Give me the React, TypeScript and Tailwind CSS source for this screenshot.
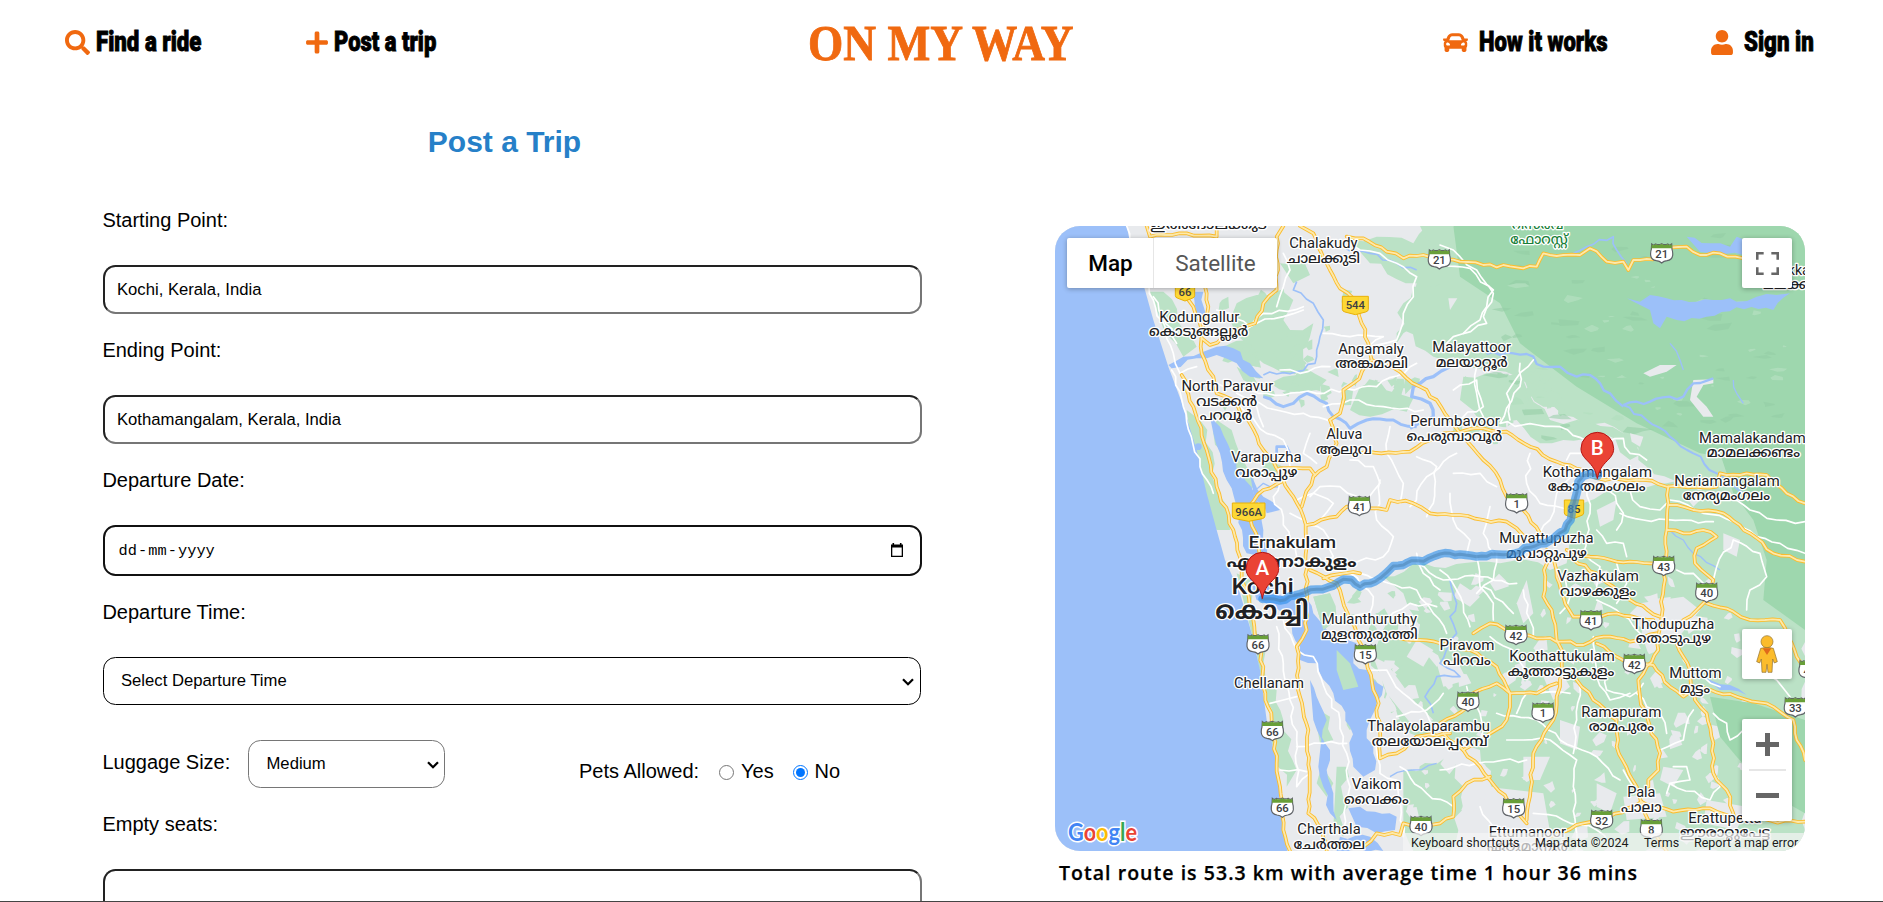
import type { ReactNode } from "react";
import { FaSearch, FaPlus, FaCar, FaUser } from "react-icons/fa";

const LAND = "#e8eaed";
const SEA = "#9cc0f9";
const GREEN = "#bbe2c6";
const FOREST = "#9ed7ae";

/* Map artwork is plotted on a 2250 x 1875 grid, three units per pixel. */

const greens = [
  // northern and central patches
  "560,250 620,225 700,215 730,240 700,300 720,330 790,310 780,350 740,400 770,430 700,460 640,430 600,380 560,345 540,300",
  "700,350 780,345 760,420 700,440 670,400",
  "700,470 760,440 830,480 800,510 720,515 660,490",
  "930,500 990,485 1040,520 1090,535 1070,575 960,590 900,570",
  "900,60 980,50 1090,70 1130,18 1210,18 1240,180 1350,250 1390,350 1300,390 1180,330 1090,320 1040,370 1060,250 1100,190 960,130",
  "1090,200 1250,170 1350,250 1400,380 1300,400 1150,410 1060,330",
  "300,215 340,215 400,330 440,380 400,410 345,340",
  "410,570 450,600 500,800 540,930 500,930 455,790 425,680",
  "500,600 545,630 590,740 610,800 590,820 540,720 490,640",
  "640,690 700,740 690,790 640,760",
  "520,380 600,360 640,400 620,440 570,430",
  "560,440 610,470 640,520 580,480",
  "690,130 760,120 780,165 730,190",
  "1110,18 1210,18 1200,90 1130,60",
  "1240,470 1310,460 1420,480 1500,600 1580,600 1720,640 1800,700 1740,720 1660,640 1540,660 1470,670 1400,600 1300,590 1230,540",
  // coast strips
  "560,1060 600,1080 640,1330 700,1500 740,1650 710,1700 660,1500 620,1300",
  "790,1130 840,1120 860,1200 820,1230",
  "860,1290 900,1330 920,1400 880,1410 860,1350",
  "790,1460 840,1490 850,1560 810,1570",
  "820,1620 850,1690 830,1730 800,1690",
  "860,1640 890,1640 880,1850 850,1820",
  // eastern midlands
  "1000,1070 1120,1030 1350,1030 1480,1030 1560,900 1660,820 1700,800 1850,790 2265,830 2265,1893 1460,1893 1400,1840 1320,1690 1290,1590 1200,1560 1080,1540 1000,1400 960,1300 1010,1210 1100,1200 1060,1120",
  "1060,1650 1190,1610 1240,1700 1200,1893 1090,1893 1060,1800",
  "1170,18 2265,18 2265,840 1900,790 1790,740 1720,640 1480,560 1400,470 1230,430 1170,330",
];

const forests = [
  "1210,18 2265,18 2265,780 2080,720 1950,700 1760,610 1580,500 1410,370 1350,250 1230,170",
  "2010,700 2265,640 2265,1230 2140,1140 2150,1020 2110,900 2050,820",
  "1980,1430 2110,1450 2265,1500 2265,1780 2160,1720 2060,1610 2010,1550",
];

const builtUp = [
  "1460,960 1560,960 1550,1030 1500,1050 1455,1020",
  "1770,1150 1900,1130 1950,1170 1880,1260 1790,1240 1740,1180",
  "1400,1150 1430,1080 1450,1180 1420,1210",
  "1230,1090 1290,1130 1260,1160 1210,1130",
  "1160,1330 1220,1320 1250,1380 1180,1400",
  "1530,1500 1590,1520 1580,1590 1530,1570",
  "1420,1610 1500,1610 1470,1680 1420,1680",
  "1640,1690 1700,1720 1680,1780 1640,1760",
  "1840,1640 1900,1650 1870,1700 1830,1680",
  "1310,1700 1480,1720 1510,1893 1330,1893 1290,1800",
  "1720,1730 1830,1720 1850,1790 1730,1800",
  "1970,1740 2090,1760 2060,1830 1960,1810",
  "1100,1260 1150,1290 1120,1340 1070,1310",
  "970,1310 1010,1330 1090,1440 1150,1500 1090,1520 1010,1420",
  "2020,940 2070,960 2060,1010 2020,990",
  "1640,870 1700,840 1690,900 1650,920",
  "1900,820 1960,830 1930,860",
  "1480,1370 1530,1350 1560,1400 1510,1440",
  "1930,480 1990,478 1990,490 1960,495 1940,530 1970,560 1990,590 1960,590 1920,540",
  "1780,460 1830,435 1880,435 1850,455 1800,470",
  "1195,235 1222,235 1200,270",
  "1740,640 1780,650 1770,680 1745,665",
];

const waters = [
  // open sea
  "15,18 230,18 243,80 285,210 310,300 355,440 400,560 440,690 470,820 500,930 525,1020 570,1120 605,1240 630,1350 650,1500 680,1630 693,1780 712,1893 15,1893",
  "355,435 400,410 460,395 500,380 550,385 600,430 640,475 600,470 560,430 500,405 440,415 365,445",
  "480,590 510,620 545,700 585,780 625,850 640,930 650,1010 590,1000 560,860 530,780 510,700 490,640",
  "600,760 640,830 690,870 650,880 610,820",
  "430,215 460,215 465,310 440,300",
  "580,1020 630,1060 700,1130 760,1120 790,1180 840,1240 920,1270 910,1330 950,1350 1000,1400 975,1470 950,1530 970,1600 975,1650 940,1670 910,1640 900,1520 850,1420 800,1330 750,1320 750,1280 700,1180 620,1140",
  "895,1765 930,1760 975,1775 1040,1790 1035,1830 980,1840 920,1820",
  "815,1550 840,1590 830,1650 850,1720 860,1800 840,1780 820,1700 805,1640",
  "780,1380 800,1430 830,1500 815,1560 790,1500",
  "870,1850 960,1850 1000,1893 860,1893",
  "1730,235 1770,245 1800,225 1850,235 1940,245 2040,235 2060,245 2120,230 2180,225 2220,220 2170,270 2060,262 1970,290 1880,300 1850,290 1830,325 1810,310 1800,270",
  "1910,50 1980,70 2040,80 2060,50 2100,65 2080,105 1950,95",
  "1960,1370 2040,1395 2090,1425 2010,1410",
];

const rivers = [
  { w: 9, d: "640,530 700,560 730,550 770,520 830,550 850,590 900,625 950,600 1030,600 1100,620" },
  { w: 10, d: "1200,440 1150,470 1090,500 1085,530 1140,550 1150,590 1080,625" },
  { w: 5, d: "740,185 730,210 790,250 820,300 810,350 800,390 795,430 740,455 640,465" },
  { w: 7, d: "1310,402 1430,402 1480,440 1530,440 1580,470 1620,465 1680,520 1720,560" },
  { w: 7, d: "1720,555 1800,545 1900,530 1930,490 1990,475" },
  { w: 6, d: "1720,555 1790,600 1860,650 1930,700 2000,760 2080,820" },
  { w: 5, d: "1570,100 1610,80 1690,50 1700,90 1730,130" },
  { w: 4, d: "1860,370 1890,420 1900,450" },
  { w: 4, d: "2050,480 2060,520 2080,550" },
  { w: 5, d: "1200,1080 1220,1150 1200,1190 1220,1240 1170,1330 1230,1370 1160,1370 1125,1430 1150,1480" },
  { w: 4, d: "1860,930 1900,960 1930,1000 2010,1050" },
  { w: 4, d: "1020,1670 1090,1650 1160,1630" },
  { w: 4, d: "590,830 640,790 690,800" },
  { w: 8, d: "680,700 680,680 710,680 720,700" },
  { w: 5, d: "880,80 960,100 1040,130 1100,150" },
];

const minor = [
  "230,18 260,110 310,240 370,400 390,460 440,440",
  "365,450 400,560 450,740 490,820",
  "310,230 380,370",
  "500,270 540,280 600,320 640,280 760,260",
  "560,340 620,310 700,290 760,270",
  "500,490 600,510 650,520 800,520 980,500 1100,430",
  "600,540 680,570 760,580 850,610",
  "570,560 650,640 700,660 720,740",
  "680,260 700,200 720,150 700,100",
  "890,60 930,90 990,100 1040,130 1100,170 1090,230 1060,280 1040,360 960,380",
  "1170,75 1210,90 1230,110 1280,150 1330,210 1310,260 1290,300 1240,340",
  "1170,135 1260,145 1330,220 1300,290 1310,310 1210,350 1180,380",
  "820,340 900,350 1000,350 960,375",
  "840,440 750,460 690,450",
  "900,720 970,740 990,790 940,850 870,800 810,800 780,830",
  "990,780 980,900 1030,950 1000,1010 900,1030",
  "690,790 670,830 700,890 720,960 740,1010",
  "740,840 790,820 850,850 810,900",
  "720,880 820,930 850,1010 760,1030",
  "1100,710 1160,740 1150,850 1130,890",
  "1080,860 1130,770 1220,700",
  "1210,510 1280,480 1300,560 1210,600",
  "1410,430 1410,500 1350,610 1530,620 1630,680",
  "1280,440 1280,520 1300,590",
  "1550,720 1560,700 1600,700 1640,670 1720,655 1740,700 1790,720",
  "1580,750 1520,820 1500,900 1460,960",
  "1670,790 1700,850 1720,880 1700,930",
  "1610,800 1620,880 1600,1000",
  "1720,790 1770,860 1830,870 1850,850",
  "1710,880 1780,900 1900,900 1990,905",
  "1860,840 1960,880 2050,905 2120,950 2190,970 2265,1000",
  "2020,820 2100,870 2180,900 2265,905",
  "1640,930 1670,970 1720,970 1730,1010",
  "2050,960 2000,1040 1990,1080",
  "2050,960 2130,1000 2150,1070 2100,1110 2090,1170",
  "1600,1000 1650,1040 1640,1100",
  "1280,1010 1290,1100 1330,1150 1330,1200",
  "1170,1050 1220,1110 1260,1220",
  "1420,1110 1440,1200 1450,1250",
  "1340,1000 1330,1080 1280,1120",
  "680,1220 700,1330 720,1440 740,1560 740,1700 780,1660",
  "700,1200 740,1290 790,1310 830,1420 870,1500 890,1600 900,1700 880,1830",
  "660,1450 700,1440 740,1430",
  "740,1580 820,1570 890,1570",
  "690,1650 770,1655",
  "960,1350 1010,1350 1060,1420 1130,1480 1160,1520",
  "980,1560 990,1660 1040,1680 1060,1850",
  "1100,1000 1120,1060 1170,1110",
  "900,1060 970,1130 960,1180 900,1190",
  "930,1060 1100,1110 1150,1180 1190,1240",
  "1010,1200 1080,1150 1160,1160",
  "1320,1250 1400,1300 1440,1360",
  "1300,1100 1390,1180",
  "1630,1250 1640,1370 1680,1440 1740,1420",
  "1660,1340 1670,1410 1740,1430 1780,1390",
  "1250,1400 1260,1440 1290,1480 1300,1580",
  "1340,1480 1460,1500 1530,1560 1640,1610 1710,1680",
  "1370,1560 1500,1560 1580,1620 1570,1700 1580,1893",
  "1170,1650 1280,1630 1430,1620",
  "1590,1400 1580,1500 1570,1600",
  "1760,1420 1790,1460 1830,1480 1850,1540",
  "1830,1590 1900,1560 1930,1470",
  "1900,1320 1960,1370 2010,1400",
  "1870,1640 1910,1640 1920,1680 1860,1690 1850,1720",
  "1860,1690 1980,1740 2010,1700 1990,1660",
  "1720,1650 1770,1720",
  "1990,1480 2030,1510 2040,1560 2080,1530",
  "2100,1350 2180,1380 2220,1430",
  "1450,1780 1540,1800 1640,1830 1700,1893",
  "1290,1760 1330,1820 1340,1893",
  "1050,1640 1130,1720 1210,1760",
  "1640,1140 1700,1170 1780,1250",
  "820,560 900,540 1000,560 1120,570",
  "1020,620 1010,700 1060,790 1050,850",
  "1210,760 1290,760 1340,800",
  "1200,820 1210,900 1260,960 1250,1000",
  "1320,860 1300,940 1330,1000",
  "1440,700 1430,790 1470,850 1560,870",
  "1450,420 1370,520 1380,600",
  "640,620 620,560 560,520",
  "780,640 760,700 800,730",
  "1100,1030 1180,1080 1290,1070 1400,1090",
  "1540,1060 1560,1130 1530,1180",
  "1700,1030 1730,1090 1700,1150",
  "1880,1050 1930,1060 1960,1090",
  "1400,1480 1430,1420 1560,1420",
  "1180,1420 1130,1470 1040,1490",
];

const mainRoads = [
  "290,18 300,50 410,40 500,50 500,18",
  "400,215 430,260 455,340 455,400 490,470 500,520 550,540 600,610 640,690 690,760 730,830 760,890 768,960 770,1230 740,1280 750,1430 775,1530 775,1780 820,1830 830,1893",
  "395,465 430,560 470,690 500,800 550,930 575,1050 610,1200 640,1340 640,1400 665,1500 680,1630 690,1700 700,1830 720,1893",
  "465,200 475,260 455,330",
  "700,18 680,50 680,210 640,250 615,310 560,330 480,375 455,355",
  "750,18 790,40 840,150 870,205 915,240 935,310 955,370 965,420 910,490 880,510 870,580 840,600 860,670 830,740 790,770 755,860",
  "690,745 780,745 795,765",
  "596,860 640,810 695,785",
  "600,895 625,960 630,1010",
  "965,420 1050,455 1110,500 1160,540 1200,600 1240,650 1300,720 1350,780 1370,830 1420,870 1470,940",
  "930,700 1080,695 1180,640 1300,625 1370,635 1440,680 1520,725 1600,750 1643,775 1780,780 1850,800 2000,800 2010,760 2150,765 2210,820 2265,850",
  "770,915 860,890 890,860 960,865 1010,870 1020,840 1090,850 1140,880 1230,885 1300,900 1370,905 1400,925 1440,960",
  "890,50 940,55 1010,95 1060,115 1120,105 1168,115 1230,125 1300,135 1420,145 1460,140 1480,100 1540,105 1590,105 1620,85 1670,125 1720,125 1735,150 1750,120 1810,118 1835,80 1910,80 1950,105 2010,100 2080,115",
  "1490,990 1480,1130 1505,1170 1520,1260 1535,1290 1530,1400 1520,1430 1510,1500 1450,1600 1435,1750 1430,1800",
  "1550,990 1620,1010 1700,1025 1800,1030 1841,1038",
  "1855,800 1855,850 1850,930 1841,1100 1835,1190 1820,1260 1825,1290 1790,1340 1765,1380 1770,1430 1800,1520 1830,1600 1825,1650 1795,1680 1795,1700",
  "1850,930 1900,940 1960,930 2000,950 1940,985 1935,1030 1990,1080 1980,1130 1940,1170 1900,1200",
  "1550,1010 1640,1060 1740,1140 1830,1190",
  "1510,1010 1540,1130 1570,1190 1623,1195 1700,1180 1810,1200",
  "1270,1240 1320,1210 1398,1240 1480,1255 1540,1265 1600,1275 1660,1250 1740,1265 1820,1240",
  "1640,1270 1700,1310 1753,1335 1810,1335 1860,1400 1900,1430 1940,1400",
  "1880,1270 1920,1350 1935,1440 1970,1480 1990,1570 1990,1660 2030,1710 2055,1800",
  "1940,1400 2060,1430 2150,1450 2230,1500 2240,1560 2265,1620",
  "1970,1150 2050,1175 2100,1200 2190,1200 2215,1250 2240,1310 2265,1350",
  "1855,855 1930,870 2020,880 2100,940 2170,1000 2265,1025",
  "1000,1245 1110,1260 1170,1270 1260,1290 1340,1340 1370,1400 1380,1420 1460,1420 1520,1390",
  "1170,1510 1254,1460 1254,1430 1340,1390 1380,1420 1370,1500 1300,1560 1240,1590",
  "1180,1540 1240,1590 1290,1640 1320,1680 1391,1760 1430,1810",
  "1320,1670 1250,1690 1210,1730 1210,1790 1170,1810 1113,1818 1060,1810 1050,1845 980,1840 940,1880",
  "780,1050 860,1090 900,1200 946,1300 980,1430 990,1530 990,1615 1040,1600 1100,1550 1200,1540",
  "820,1075 870,1062 930,1060",
  "1580,1380 1630,1440 1700,1500 1700,1580 1760,1700 1774,1750",
  "1500,1850 1600,1810 1655,1800 1774,1745 1870,1775 1980,1765 2060,1800 2265,1805",
  "1774,1750 1804,1828 1850,1893",
];

const routeLine =
  "637,1137 690,1142 750,1122 800,1108 850,1097 880,1078 905,1080 930,1100 990,1075 1010,1058 1030,1038 1060,1035 1085,1022 1120,1024 1170,1002 1200,1000 1230,1003 1280,1010 1340,1003 1380,1003 1440,982 1500,962 1545,930 1562,900 1565,865 1580,820 1585,785 1600,768 1620,762 1643,768";

type Label = [string, number, number, number];

const latin: Label[] = [
  ["Chalakudy", 820, 85, 205],
  ["Kodungallur", 448, 305, 240],
  ["Angamaly", 963, 402, 197],
  ["North Paravur", 532, 513, 275],
  ["Aluva", 883, 657, 108],
  ["Varapuzha", 649, 727, 212],
  ["Malayattoor", 1265, 395, 236],
  ["Perumbavoor", 1215, 618, 269],
  ["Kothamangalam", 1642, 770, 328],
  ["Mamalakandam", 2107, 668, 320],
  ["Neriamangalam", 2031, 797, 316],
  ["Mulanthuruthy", 958, 1213, 286],
  ["Chellanam", 657, 1403, 210],
  ["Thalayolaparambu", 1136, 1534, 368],
  ["Vaikom", 980, 1707, 150],
  ["Cherthala", 837, 1841, 190],
  ["Piravom", 1251, 1290, 165],
  ["Muvattupuzha", 1489, 968, 283],
  ["Vazhakulam", 1644, 1084, 245],
  ["Thodupuzha", 1870, 1226, 246],
  ["Koothattukulam", 1536, 1322, 317],
  ["Muttom", 1936, 1375, 157],
  ["Ramapuram", 1714, 1490, 240],
  ["Pala", 1774, 1732, 85],
  ["Erattupetta", 2025, 1808, 220],
  ["Ettumanoor", 1432, 1850, 232],
  ["Malakkappara", 2253, 165, 265],
];

const malayalam: Label[] = [
  ["ഇരിങ്ങാലക്കുട", 475, 27, 350],
  ["ചാലക്കുടി", 820, 130, 220],
  ["കൊടുങ്ങല്ലൂർ", 446, 348, 298],
  ["അങ്കമാലി", 965, 445, 218],
  ["വടക്കൻ", 530, 557, 183],
  ["പറവൂർ", 528, 600, 158],
  ["ആലുവ", 882, 703, 168],
  ["വരാപ്പുഴ", 649, 772, 186],
  ["മലയാറ്റൂർ", 1265, 440, 216],
  ["പെരുമ്പാവൂർ", 1213, 662, 287],
  ["കോതമംഗലം", 1640, 812, 294],
  ["മാമലക്കണ്ടം", 2110, 710, 280],
  ["നേര്യമംഗലം", 2029, 840, 262],
  ["മുളന്തുരുത്തി", 958, 1257, 290],
  ["തലയോലപ്പറമ്പ്", 1139, 1578, 348],
  ["വൈക്കം", 979, 1753, 194],
  ["ചേർത്തല", 838, 1886, 215],
  ["പിറവം", 1251, 1334, 143],
  ["മുവാറ്റുപുഴ", 1489, 1013, 242],
  ["വാഴക്കുളം", 1644, 1128, 228],
  ["തൊടുപുഴ", 1870, 1270, 226],
  ["കൂത്താട്ടുകുളം", 1533, 1368, 320],
  ["മുട്ടം", 1935, 1420, 90],
  ["രാമപുരം", 1714, 1534, 196],
  ["പാലാ", 1774, 1776, 122],
  ["ഈരാറ്റുപേട്ട", 2025, 1852, 270],
  ["ഏറ്റുമാനൂർ", 1432, 1893, 242],
  ["മലക്കപ്പാറ", 2256, 208, 236],
];

const stateShields: [string, number, number][] = [
  ["21", 1168, 118],
  ["41", 928, 858],
  ["21", 1835, 100],
  ["1", 1400, 850],
  ["66", 624, 1273],
  ["66", 667, 1533],
  ["66", 697, 1763],
  ["15", 946, 1303],
  ["40", 1113, 1818],
  ["43", 1841, 1038],
  ["40", 1970, 1118],
  ["41", 1623, 1201],
  ["42", 1398, 1245],
  ["42", 1753, 1332],
  ["40", 1254, 1445],
  ["1", 1479, 1478],
  ["15", 1391, 1765],
  ["32", 1655, 1800],
  ["8", 1804, 1828],
  ["33", 2236, 1462],
  ["44", 2280, 1350],
];

const nationalShields: [string, number, number, number][] = [
  ["66", 405, 215, 58],
  ["544", 916, 256, 78],
  ["966A", 596, 876, 98],
  ["85", 1572, 867, 58],
];

function random(seed: number) {
  let s = seed;
  return () => {
    s = (s * 16807) % 2147483647;
    return s / 2147483647;
  };
}

/* Deterministic field and ridge texture. */
function scatter(seed: number, count: number, x: number, y: number, w: number, h: number, size: number, flat: number) {
  const rnd = random(seed);
  return Array.from({ length: count }, () => {
    const cx = x + rnd() * w;
    const cy = y + rnd() * h;
    const r = size * (0.4 + rnd());
    return Array.from({ length: 5 }, (_, i) => {
      const a = (i / 5) * Math.PI * 2 + rnd();
      const k = r * (0.35 + rnd() * 0.8);
      return `${Math.round(cx + Math.cos(a) * k)},${Math.round(cy + Math.sin(a) * k * flat)}`;
    }).join(" ");
  });
}

/* Subdivides a line and nudges the new points, as surveyed roads bend. */
function winding(points: string, amount: number, step: number) {
  const pts = points.split(" ").map((p) => p.split(",").map(Number));
  const rnd = random(Math.abs(pts[0][0] * 7919 + pts[0][1] * 31 + pts.length) + 17);
  rnd();
  const out: string[] = [];
  pts.forEach(([x, y], i) => {
    out.push(`${x},${y}`);
    const next = pts[i + 1];
    if (!next) return;
    const dx = next[0] - x;
    const dy = next[1] - y;
    const len = Math.hypot(dx, dy);
    const n = Math.floor(len / step);
    for (let k = 1; k < n; k++) {
      const off = (rnd() - 0.5) * 2 * amount;
      out.push(`${Math.round(x + (dx * k) / n - (dy / len) * off)},${Math.round(y + (dy * k) / n + (dx / len) * off)}`);
    }
  });
  return out.join(" ");
}

const mainWinding = mainRoads.map((p) => winding(p, 5, 20));
const minorWinding = minor.map((p) => winding(p, 7, 22));
const riverWinding = rivers.map((r) => ({ w: r.w, d: winding(r.d, 7, 20) }));
const greensWinding = greens.map((p) => winding(p, 14, 30));
const lakesWinding = waters.map((p, i) => (i === 0 ? p : winding(p, 7, 22)));
const routeWinding = winding(routeLine, 4, 14);

const fieldsGrey = scatter(71, 150, 1010, 1060, 1080, 800, 22, 1);
const fieldsGreen = [
  ...scatter(913, 36, 520, 220, 380, 330, 22, 1),
  ...scatter(37, 26, 1220, 440, 330, 220, 24, 1),
  ...scatter(55, 22, 900, 1090, 160, 440, 20, 1),
  ...scatter(77, 14, 880, 480, 260, 110, 20, 1),
];
const ridgesLight = scatter(401, 34, 1400, 170, 820, 500, 26, 0.35);
const ridgesDark = scatter(1229, 50, 1330, 40, 900, 640, 40, 0.3);

function Pin({ x, y, letter }: { x: number; y: number; letter: string }) {
  return (
    <g transform={`translate(${x} ${y})`}>
      <path
        d="M0 0C-5-26-14-38-30-54C-42-66-49-76-49-90A49 49 0 0 1 49-90C49-76 42-66 30-54C14-38 5-26 0 0Z"
        fill="#ea4335"
        stroke="#b31412"
        strokeWidth="3"
      />
      <text y="-70" textAnchor="middle" fontSize="62" fontWeight="500" fill="#fff">
        {letter}
      </text>
    </g>
  );
}

function MapArtwork() {
  return (
    <svg className="absolute inset-0" width="750" height="625" viewBox="15 18 2250 1875" fontFamily="Roboto, 'Noto Sans Malayalam', sans-serif">
      <rect x="15" y="18" width="2250" height="1875" fill={LAND} />
      <g fill={GREEN}>
        {greensWinding.map((p) => <polygon key={p} points={p} />)}
        {fieldsGreen.map((p) => <polygon key={p} points={p} />)}
      </g>
      <g fill={LAND}>{fieldsGrey.map((p) => <polygon key={p} points={p} />)}</g>
      <g fill={FOREST}>{forests.map((p) => <polygon key={p} points={p} />)}</g>
      <g fill="#94cda5" opacity="0.55">{ridgesDark.map((p) => <polygon key={p} points={p} />)}</g>
      <g fill="#b4e0c0" opacity="0.75">{ridgesLight.map((p) => <polygon key={p} points={p} />)}</g>
      <g fill={LAND}>{builtUp.map((p) => <polygon key={p} points={p} />)}</g>
      <g fill={SEA}>
        {lakesWinding.map((p) => <polygon key={p} points={p} />)}
        <circle cx="445" cy="680" r="10" />
      </g>
      <g fill={GREEN}>
        <polygon points="860,1290 900,1330 925,1400 880,1410 860,1350" />
        <polygon points="790,1130 840,1120 860,1200 820,1230" />
      </g>
      <g fill="none" stroke={SEA} strokeLinejoin="round">
        {riverWinding.map((r) => <polyline key={r.d} points={r.d} strokeWidth={r.w} />)}
      </g>
      <g fill="none" stroke="#fff" strokeWidth="5" strokeLinejoin="round" strokeLinecap="round">
        {minorWinding.map((p) => <polyline key={p} points={p} />)}
      </g>
      <g fill="none" stroke="#fbbc2c" strokeWidth="11" strokeLinejoin="round" strokeLinecap="round">
        {mainWinding.map((p) => <polyline key={p} points={p} />)}
      </g>
      <g fill="none" stroke="#fde9ab" strokeWidth="5.5" strokeLinejoin="round" strokeLinecap="round">
        {mainWinding.map((p) => <polyline key={p} points={p} />)}
      </g>
      {nationalShields.map(([t, x, y, w]) => (
        <g key={t + x} transform={`translate(${x} ${y})`}>
          <path d={`M${-w / 2} -27H${w / 2}V12Q${w / 2} 18 ${w / 2 - 8} 20L0 28L${-w / 2 + 8} 20Q${-w / 2} 18 ${-w / 2} 12Z`} fill="#fdd835" stroke="#e8b10a" strokeWidth="3" />
          <text y="12" textAnchor="middle" fontSize="34" fontWeight="500" fill="#3c4043">{t}</text>
        </g>
      ))}
      {stateShields.map(([t, x, y]) => (
        <g key={`${t}-${x}-${y}`} transform={`translate(${x} ${y})`}>
          <path d="M-30-28Q-24-22-18-28Q-9-24 0-29Q9-24 18-28Q24-22 30-28L31-12Q34-4 33 6Q31 20 16 22Q6 23 0 29Q-6 23-16 22Q-31 20-33 6Q-34-4-31-12Z" fill="#fff" stroke="#5f6368" strokeWidth="3.5" />
          <path d="M-30-27Q-24-22-18-27Q-9-23 0-28Q9-23 18-27Q24-22 30-27L31-15H-31Z" fill="#689f38" />
          <text y="14" textAnchor="middle" fontSize="34" fontWeight="500" fill="#3c4043">{t}</text>
        </g>
      ))}
      <g fill="#202124" stroke="#fff" strokeWidth="8" strokeLinejoin="round" paintOrder="stroke" textAnchor="middle">
        <g fontSize="45">
          {latin.map(([t, x, y, w]) => <text key={t} x={x} y={y} textLength={w} lengthAdjust="spacingAndGlyphs">{t}</text>)}
        </g>
        <g fontSize="41" fontWeight="500">
          {malayalam.map(([t, x, y, w]) => <text key={t} x={x} y={y} textLength={w} lengthAdjust="spacingAndGlyphs">{t}</text>)}
        </g>
        <g fontSize="41" fontWeight="500" fill="#188038">
          <text x="1463" y="28" textLength="155" lengthAdjust="spacingAndGlyphs">റിസർവ്</text>
          <text x="1467" y="72" textLength="172" lengthAdjust="spacingAndGlyphs">ഫോറസ്റ്റ്</text>
        </g>
        <text x="727" y="984" fontSize="50" fontWeight="500" textLength="262" lengthAdjust="spacingAndGlyphs">Ernakulam</text>
        <text x="725" y="1042" fontSize="48" fontWeight="700" textLength="390" lengthAdjust="spacingAndGlyphs">എറണാകുളം</text>
        <text x="638" y="1121" fontSize="68" fontWeight="500" textLength="187" lengthAdjust="spacingAndGlyphs">Kochi</text>
        <text x="636" y="1197" fontSize="74" fontWeight="700" textLength="280" lengthAdjust="spacingAndGlyphs">കൊച്ചി</text>
      </g>
      <polyline points={routeWinding} fill="none" stroke="#2c8eea" strokeOpacity="0.62" strokeWidth="25" strokeLinejoin="round" strokeLinecap="round" />
      <polyline points={routeWinding} fill="none" stroke="#4a7fae" strokeOpacity="0.5" strokeWidth="9" strokeLinejoin="round" strokeLinecap="round" />
      <Pin x={637} y={1136} letter="A" />
      <Pin x={1642} y={776} letter="B" />
    </svg>
  );
}

function MapButton({ className, children }: { className: string; children: ReactNode }) {
  return <div className={`flex items-center justify-center rounded-[2px] bg-white shadow-[0_1px_5px_rgba(0,0,0,0.3)] ${className}`}>{children}</div>;
}

function RouteMap() {
  return (
    <div className="relative h-[625px] w-[750px] overflow-hidden rounded-[25px] bg-[#e5e3df] font-[Roboto,sans-serif]">
      <MapArtwork />
      <div className="absolute left-3 top-3 flex h-[50px] w-[210px] rounded-[2px] bg-white text-[22.5px] shadow-[0_1px_5px_rgba(0,0,0,0.3)]">
        <div className="flex w-[87px] items-center justify-center border-r border-[#e6e6e6] pl-px pt-px font-medium text-black">Map</div>
        <div className="flex flex-1 items-center justify-center pt-px text-[#565656]">Satellite</div>
      </div>
      <MapButton className="absolute right-[13px] top-3 size-[50px]">
        <svg width="23" height="23" viewBox="0 0 18 18" fill="#666">
          <path d="M0 0v6h2V2h4V0H0zm16 0h-4v2h4v4h2V0h-2zm0 16h-4v2h6v-6h-2v4zM2 12H0v6h6v-2H2v-4z" />
        </svg>
      </MapButton>
      <MapButton className="absolute right-[13px] top-[403px] size-[50px]">
        <svg width="22" height="38" viewBox="0 0 66 114">
          <g fill="#fbbc2c" stroke="#8d6e2f" strokeWidth="2">
            <path d="M14 40Q33 34 52 40L64 80L55 84L50 72L48 112H36L33 88L30 112H18L16 72L11 84L2 80Z" />
            <circle cx="33" cy="20" r="18" />
          </g>
          <path d="M20 40H46L33 60Z" fill="#e06a1b" />
        </svg>
      </MapButton>
      <MapButton className="absolute right-[13px] top-[493px] h-[102px] w-[50px] flex-col">
        <span className="flex h-[50px] items-center">
          <svg width="23" height="23" viewBox="0 0 23 23" fill="#666"><path d="M9 0h5v9h9v5h-9v9H9v-9H0V9h9z" /></svg>
        </span>
        <span className="h-[1.5px] w-[37px] bg-[#e6e6e6]" />
        <span className="flex h-[50px] items-center">
          <svg width="23" height="5" fill="#666"><rect width="23" height="5" /></svg>
        </span>
      </MapButton>
      <svg className="absolute left-[12px] top-[594px]" width="74" height="31" fontFamily="Lato, sans-serif">
        <text x="1" y="20.5" fontSize="24" fontWeight="700" textLength="69" lengthAdjust="spacingAndGlyphs" stroke="#fff" strokeWidth="3" paintOrder="stroke">
          <tspan fill="#4285f4">G</tspan>
          <tspan fill="#ea4335">o</tspan>
          <tspan fill="#fbbc05">o</tspan>
          <tspan fill="#4285f4">g</tspan>
          <tspan fill="#34a853">l</tspan>
          <tspan fill="#ea4335">e</tspan>
        </text>
      </svg>
      <div className="absolute bottom-0 right-0 flex h-[18px] w-[402px] items-center whitespace-nowrap bg-[#f5f5f5]/70 pl-2 pt-[2px] text-[12.5px] leading-none text-black/90">
        <span className="w-[124px]">Keyboard shortcuts</span>
        <span className="w-[109px]">Map data ©2024</span>
        <span className="w-[50px]">Terms</span>
        <span>Report a map error</span>
      </div>
    </div>
  );
}

function NavText({ className, children }: { className: string; children: ReactNode }) {
  return (
    <span className={`block origin-left whitespace-nowrap font-[Roboto,sans-serif] text-[28px] font-black leading-8 text-black [-webkit-text-stroke:0.9px_black] ${className}`}>
      {children}
    </span>
  );
}

function Header() {
  return (
    <header className="flex h-[84px] items-center pl-[65px] text-[25px] text-[#f06910]">
      <div className="flex w-[241px] items-center gap-[6px]">
        <FaSearch className="shrink-0" />
        <NavText className="scale-x-[0.795]">Find a ride</NavText>
      </div>
      <div className="flex w-[502px] items-center gap-[6px]">
        <FaPlus className="w-[22px] shrink-0" />
        <NavText className="scale-x-[0.785]">Post a trip</NavText>
      </div>
      <div className="w-[635px]">
        <h1 className="origin-left scale-x-[0.89] whitespace-nowrap pt-px font-['Liberation_Serif',serif] text-[51px] font-bold leading-[60px] [-webkit-text-stroke:0.8px_#f06910]">ON MY WAY</h1>
      </div>
      <div className="flex w-[268px] items-center gap-[11px]">
        <FaCar className="shrink-0" />
        <NavText className="scale-x-[0.787]">How it works</NavText>
      </div>
      <div className="flex items-center gap-[11px]">
        <FaUser className="w-[22px] shrink-0" />
        <NavText className="scale-x-[0.797]">Sign in</NavText>
      </div>
    </header>
  );
}

function Chevron({ className }: { className: string }) {
  return (
    <svg className={className} width="12" height="8" viewBox="0 0 12 8" fill="none" stroke="#000" strokeWidth="2.2">
      <path d="M1 1.2L6 6.2L11 1.2" />
    </svg>
  );
}

const inset = "w-[819px] rounded-[12.5px] border-2 border-t-[#222] border-l-[#222] border-r-[#767676] border-b-[#767676] px-[12px] text-[16.67px] outline-none";

function TripForm() {
  return (
    <form className="flex flex-col pl-[103px] text-[20px] leading-[23px] text-black">
      <h2 className="w-[803px] text-center text-[30px] font-bold leading-9 text-[#2680c8]">Post a Trip</h2>
      <label className="-ml-[0.6px] mt-[49px]">Starting Point:</label>
      <input className={`mt-[33px] h-[49px] ${inset}`} defaultValue="Kochi, Kerala, India" />
      <label className="-ml-[0.6px] mt-[25px]">Ending Point:</label>
      <input className={`mt-[33px] h-[49px] ${inset}`} defaultValue="Kothamangalam, Kerala, India" />
      <label className="-ml-[0.6px] mt-[25px]">Departure Date:</label>
      <div className="mt-[33px] flex h-[51px] w-[819px] items-center justify-between rounded-[12.5px] border-2 border-[#111] pl-[12.5px] pr-[16px] font-['Liberation_Mono',monospace] text-[15.3px]">
        <span className="flex pt-px">
          <span className="px-[1.1px]">dd</span>-<span className="px-[1.1px]">mm</span>-<span className="px-[1.1px]">yyyy</span>
        </span>
        <svg width="14" height="15" viewBox="0 0 14 15">
          <path d="M2.5 0h1.6v1.4h5.8V0h1.6v1.4H13V14H1V1.4h1.5zM2.3 4.6v8.2h9.4V4.6z" fill="#000" fillRule="evenodd" />
        </svg>
      </div>
      <label className="-ml-[0.6px] mt-[25px]">Departure Time:</label>
      <div className="mt-[33px] flex h-12 w-[818px] items-center justify-between rounded-[12.5px] border border-black pl-[17px] pr-[6px] text-[16.67px]">
        <span className="-mt-[2px]">Select Departure Time</span>
        <Chevron className="mt-px" />
      </div>
      <div className="mt-[35px] flex h-12 items-start">
        <label className="-ml-[0.6px] mt-[11px] w-[145.6px]">Luggage Size:</label>
        <div className="flex h-12 w-[197px] items-center justify-between rounded-[12.5px] border border-[#767676] pl-[17.5px] pr-[5px] text-[16.67px]">
          <span className="-mt-[2px]">Medium</span>
          <Chevron className="mt-px" />
        </div>
        <div className="ml-[134px] mt-[20px] flex items-center">
          <span className="w-[140px]">Pets Allowed:</span>
          <span className="mt-[2px] size-[15px] rounded-full border border-[#767676]" />
          <span className="ml-[7px] w-[51.5px]">Yes</span>
          <span className="mt-[2px] flex size-[15px] items-center justify-center rounded-full border-[1.5px] border-[#0075ff]">
            <span className="size-[9px] rounded-full bg-[#0075ff]" />
          </span>
          <span className="ml-[7px]">No</span>
        </div>
      </div>
      <label className="-ml-[0.6px] mt-[25px]">Empty seats:</label>
      <input className={`mt-[33px] h-[49px] ${inset}`} />
    </form>
  );
}

export default function App() {
  return (
    <div className="flex h-[902px] w-[1883px] flex-col overflow-hidden bg-white font-['Liberation_Sans',Arial,sans-serif]">
      <div className="min-h-0 flex-1 overflow-hidden">
        <Header />
        <main className="flex pt-[40px]">
          <TripForm />
          <section className="ml-[133px] pt-[102px]">
            <RouteMap />
            <p className="ml-1 mt-[8px] whitespace-nowrap font-['Open_Sans',sans-serif] text-[19.5px] font-semibold leading-[28px] tracking-[1.04px] text-black [-webkit-text-stroke:0.25px_black]">
              Total route is 53.3 km with average time 1 hour 36 mins
            </p>
          </section>
        </main>
      </div>
      <div className="h-px shrink-0 bg-[#444]" />
    </div>
  );
}
